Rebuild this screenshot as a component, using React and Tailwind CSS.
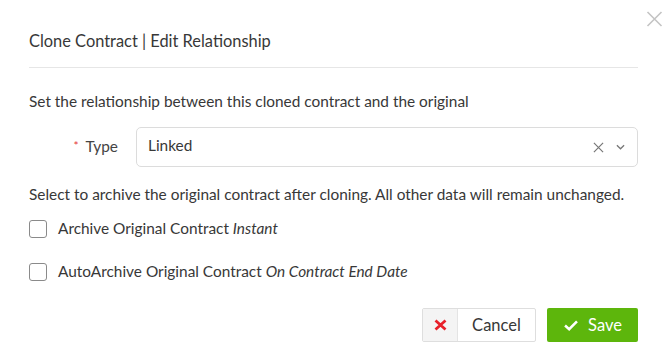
import React from "react";

const font = { fontFamily: "Lato, 'Noto Sans', sans-serif" };

function Checkbox() {
  return <span className="inline-block w-[18px] h-[18px] rounded-[3px] border border-[#8a8a8a] bg-white shrink-0" />;
}

export default function App() {
  return (
    <div className="relative w-[670px] h-[353px] bg-white text-[#383838]" style={font}>
      <button className="absolute right-[7px] top-[11px] w-[17px] h-[16px] text-[#c4c4c4]">
        <svg viewBox="0 0 16 16" width="17" height="16" stroke="currentColor" strokeWidth="1.6" fill="none">
          <path d="M1 1 L15 15 M15 1 L1 15" />
        </svg>
      </button>
      <div className="pl-[29px] pr-[32px]">
        <div className="h-[68px] pt-[14px] flex items-center border-b border-[#e6e6e6]">
          <h2 className="text-[16.4px] leading-[20px] text-[#383838]">Clone Contract | Edit Relationship</h2>
        </div>
        <p className="mt-[23px] text-[15.4px] leading-[20px]">Set the relationship between this cloned contract and the original</p>
        <div className="mt-[16px] flex items-center">
          <label className="w-[107px] pr-[18px] text-right text-[15.4px] leading-[20px] text-[#444]">
            <span className="text-[#e53935] text-[12px] mr-[7px] relative top-[-2px]">*</span>Type
          </label>
          <div className="flex-1 h-[40px] border border-[#dcdcdc] rounded-[5px] flex items-center pl-[11px] pr-[12px]">
            <span className="flex-1 text-[15.4px] text-[#383838] relative top-[-1px]">Linked</span>
            <svg viewBox="0 0 12 12" width="11" height="11" stroke="#777" strokeWidth="1.3" fill="none">
              <path d="M1 1 L11 11 M11 1 L1 11" />
            </svg>
            <svg className="ml-[12px]" viewBox="0 0 10 6" width="9" height="6" stroke="#777" strokeWidth="1.4" fill="none">
              <path d="M1 1 L5 5 L9 1" />
            </svg>
          </div>
        </div>
        <p className="mt-[17px] text-[15.4px] leading-[20px]">Select to archive the original contract after cloning. All other data will remain unchanged.</p>
        <div className="mt-[15px] h-[20px] flex items-center gap-[11px] text-[15.4px]">
          <Checkbox />
          <span>Archive Original Contract <i>Instant</i></span>
        </div>
        <div className="mt-[23px] h-[20px] flex items-center gap-[11px] text-[15.4px]">
          <Checkbox />
          <span>AutoArchive Original Contract <i>On Contract End Date</i></span>
        </div>
        <div className="mt-[26px] flex justify-end gap-[11px]">
          <button className="h-[34px] w-[114px] flex border border-[#dedede] bg-white rounded-[2px] overflow-hidden">
            <span className="w-[35px] h-full bg-[#f4f4f4] border-r border-[#e4e4e4] flex items-center justify-center">
              <svg viewBox="0 0 13 12" width="13" height="12" stroke="#e8202a" strokeWidth="2.8" fill="none">
                <path d="M1.5 1.5 L11.5 10.5 M11.5 1.5 L1.5 10.5" />
              </svg>
            </span>
            <span className="flex-1 flex items-center justify-center text-[16.5px] text-[#383838]">Cancel</span>
          </button>
          <button className="h-[34px] w-[91px] flex items-center justify-center gap-[9px] bg-[#5db60c] text-white text-[16.5px] rounded-[2px]">
            <svg viewBox="0 0 16 12" width="16" height="11" stroke="white" strokeWidth="2.8" fill="none">
              <path d="M1.5 6 L6 10 L14.5 1.5" />
            </svg>
            Save
          </button>
        </div>
      </div>
    </div>
  );
}
